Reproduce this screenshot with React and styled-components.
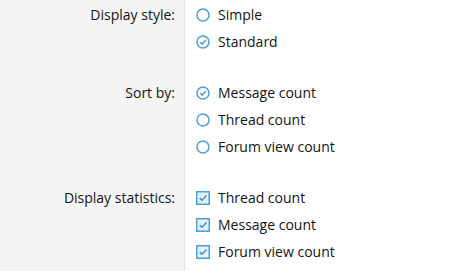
import React from 'react';
import styled, { createGlobalStyle } from 'styled-components';

const GlobalStyle = createGlobalStyle`
  html, body {
    margin: 0;
    padding: 0;
  }
  body {
    font-family: "Open Sans", "Noto Sans", sans-serif;
    font-size: 14px;
    color: #141414;
  }
`;

const groups = [
  { label: 'Display style:', type: 'radio', options: [['Simple', false], ['Standard', true]] },
  { label: 'Sort by:', type: 'radio', options: [['Message count', true], ['Thread count', false], ['Forum view count', false]] },
  { label: 'Display statistics:', type: 'check', options: [['Thread count', true], ['Message count', true], ['Forum view count', true]] },
];

const RadioIcon = ({ on }) => (
  <svg width='14' height='14' viewBox='0 0 14 14'>
    <circle cx='7' cy='7' r='6' fill='#fff' stroke='#4a9fdc' strokeWidth='1.5' />
    {on && <path d='M4.2 7.2 L6.2 9.1 L9.9 5.1' fill='none' stroke='#4a9fdc' strokeWidth='1.5' />}
  </svg>
);

const CheckIcon = ({ on }) => (
  <svg width='14' height='14' viewBox='0 0 14 14'>
    <rect x='0.75' y='0.75' width='12.5' height='12.5' fill='#e6f2fb' stroke='#4a9fdc' strokeWidth='1.5' />
    {on && <path d='M3.7 7.1 L6 9.3 L10.4 4.6' fill='none' stroke='#3a8fd0' strokeWidth='1.5' />}
  </svg>
);

const Form = () => (
  <Page>
    {groups.map(g => (
      <Group key={g.label}>
        <Label>{g.label}</Label>
        <Options>
          {g.options.map(([text, on]) => (
            <Option key={text}>
              {g.type === 'radio' ? <RadioIcon on={on} /> : <CheckIcon on={on} />}
              <span>{text}</span>
            </Option>
          ))}
        </Options>
      </Group>
    ))}
  </Page>
);

const Page = styled.div`
  height: 100vh;
  overflow: hidden;
  padding-top: 1px;
  box-sizing: border-box;
  background: linear-gradient(to right, #f5f5f5 184px, #e4e4e4 184px, #e4e4e4 185px, #fff 185px);
`;

const Group = styled.div`
  display: flex;
  padding-bottom: 24px;
`;

const Label = styled.div`
  width: 175px;
  flex-shrink: 0;
  text-align: right;
  line-height: 27px;
`;

const Options = styled.div`
  display: flex;
  flex-direction: column;
  padding-left: 21px;
`;

const Option = styled.label`
  display: flex;
  align-items: center;
  gap: 8px;
  height: 27px;
`;

export default function App() {
  return (
    <>
      <GlobalStyle />
      <Form />
    </>
  );
}
